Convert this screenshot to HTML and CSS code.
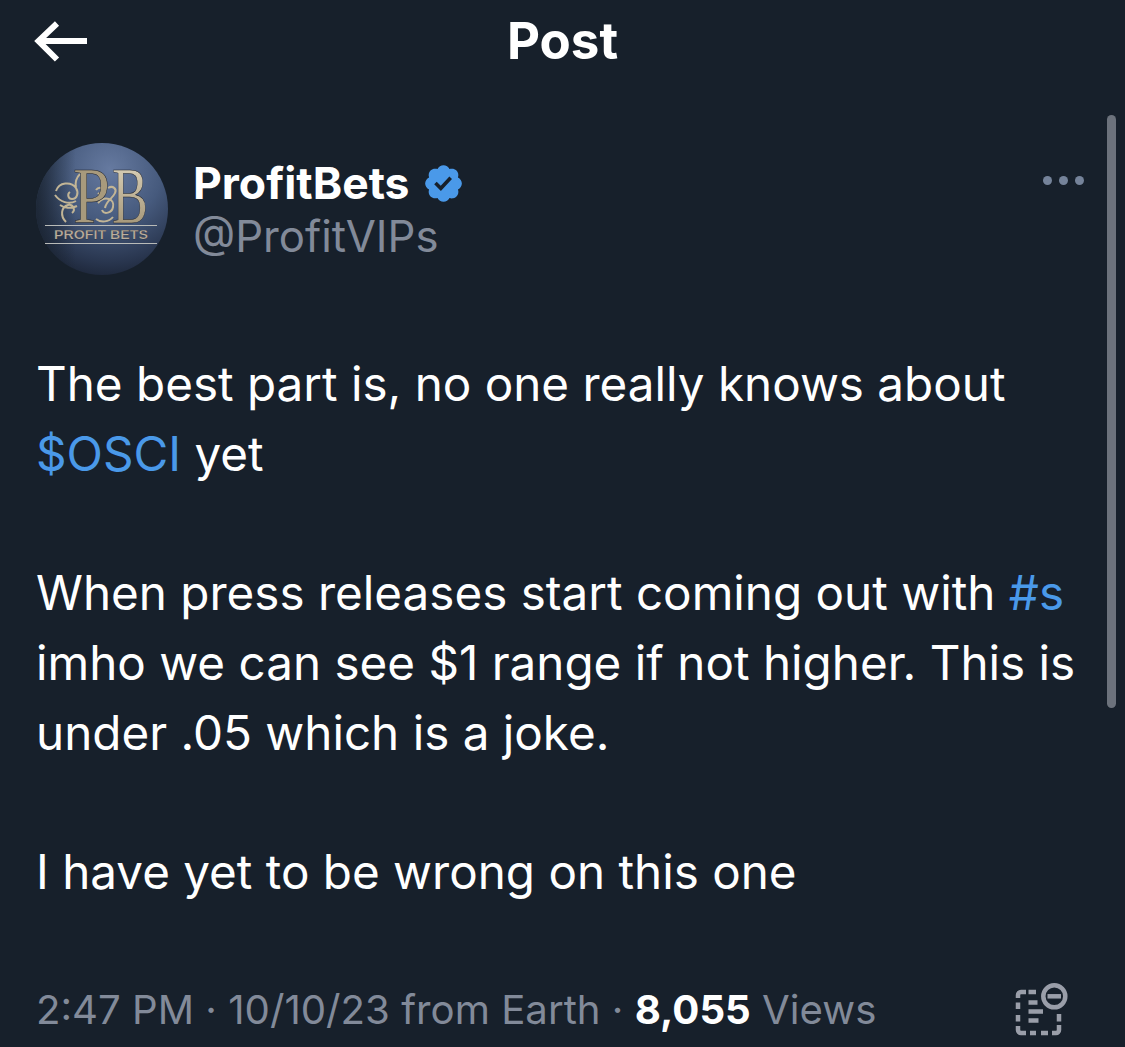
FILE: index.html
```html
<!DOCTYPE html>
<html lang="en">
<head>
<meta charset="utf-8">
<title>Post</title>
<link rel="stylesheet" href="styles.css">
</head>
<body>
<div class="screen">
  <header class="topbar">
    <svg class="back" viewBox="0 0 54 44" width="54" height="44"><path d="M53 20H4M23 2.500 4.500 20 23 38.500" fill="none" stroke="#fff" stroke-width="6"/></svg>
    <h1 class="title">Post</h1>
  </header>
  <section class="author">
    <div class="avatar">
      <svg viewBox="0 0 132 132" width="132" height="132">
        <defs>
          <radialGradient id="av" cx="0.56" cy="0.2" r="0.88"><stop offset="0" stop-color="#667aa0"/><stop offset="0.45" stop-color="#465a7d"/><stop offset="0.8" stop-color="#29364f"/><stop offset="1" stop-color="#182030"/></radialGradient>
          <linearGradient id="gold" x1="0" y1="0" x2="0" y2="1"><stop offset="0" stop-color="#e2dac4"/><stop offset="1" stop-color="#9a8a6a"/></linearGradient>
          <linearGradient id="shade" x1="0" y1="0" x2="1" y2="0"><stop offset="0" stop-color="#17202b" stop-opacity=".75"/><stop offset="0.3" stop-color="#17202b" stop-opacity="0"/></linearGradient>
        </defs>
        <circle cx="66" cy="66" r="66" fill="url(#av)"/>
        <circle cx="66" cy="66" r="66" fill="url(#shade)"/>
        <g fill="none" stroke="#c2b596" stroke-width="2">
          <path d="M20 48c3-9 15-10 20-3 3 5 1 11-4 11-4 0-5-5-2-7M19 52c5 7 14 10 21 6M24 62c4 3 11 4 17 1M44 31c-4 4-5 9-4 14M30 79c-6-6-5-15 2-17 5-1 8 5 4 8"/>
          <path d="M62 60c7-8 17-4 15 4-1 6-9 8-11 3M60 76c5 4 13 3 17-2M72 45c5-3 9 1 7 5-2 5-9 8-10 15M60 47c2-3 6-3 7 0s-3 5-5 3"/>
        </g>
        <text class="mono mono-p" x="37" y="80" textLength="37" lengthAdjust="spacingAndGlyphs">P</text>
        <text class="mono" x="76" y="80" textLength="36" lengthAdjust="spacingAndGlyphs">B</text>
        <rect x="9" y="82" width="112" height="1" fill="#b9bbb8"/>
        <text class="brand" x="18" y="96" textLength="94" lengthAdjust="spacingAndGlyphs">PROFIT BETS</text>
        <rect x="9" y="100" width="112" height="1" fill="#b9bbb8"/>
      </svg>
    </div>
    <div class="names">
      <div class="name-row">
        <span class="name">ProfitBets</span>
        <svg class="badge" viewBox="0 0 22 22" width="43" height="43"><path fill="#4a99e9" d="M20.396 11c-.018-.646-.215-1.275-.57-1.816-.354-.54-.852-.972-1.438-1.246.223-.607.27-1.264.14-1.897-.131-.634-.437-1.218-.882-1.687-.47-.445-1.053-.75-1.687-.882-.633-.13-1.29-.083-1.897.14-.273-.587-.704-1.086-1.245-1.44S11.647 1.620 11 1.604c-.646.017-1.273.213-1.813.568s-.969.854-1.240 1.440c-.608-.223-1.267-.272-1.902-.14-.635.13-1.220.436-1.690.882-.445.47-.749 1.055-.878 1.688-.13.633-.08 1.290.144 1.896-.587.274-1.087.705-1.443 1.245-.356.54-.555 1.170-.574 1.817.02.647.218 1.276.574 1.817.356.54.856.972 1.443 1.245-.224.606-.274 1.263-.144 1.896.13.634.433 1.218.877 1.688.47.443 1.054.747 1.687.878.633.132 1.290.084 1.897-.136.274.586.705 1.084 1.246 1.439.54.354 1.170.551 1.816.569.647-.016 1.276-.213 1.817-.567s.972-.854 1.245-1.440c.604.239 1.266.296 1.903.164.636-.132 1.220-.447 1.680-.907.46-.46.776-1.044.908-1.681s.075-1.299-.165-1.903c.586-.274 1.084-.705 1.439-1.246.354-.54.551-1.170.569-1.816z"/><path fill="#17202b" d="M9.662 14.850l-3.429-3.428 1.293-1.302 2.072 2.072 4.400-4.794 1.347 1.246z"/></svg>
      </div>
      <div class="handle">@ProfitVIPs</div>
    </div>
    <div class="more"><i></i><i></i><i></i></div>
  </section>
  <article class="body">
    <p>The best part is, no one really knows about<br><span class="link">$OSCI</span> yet</p>
    <p>When press releases start coming out with <span class="link">#s</span><br>imho we can see $1 range if not higher. This is<br>under .05 which is a joke.</p>
    <p>I have yet to be wrong on this one</p>
  </article>
  <footer class="meta">
    <div class="stamp">2:47 PM · 10/10/23 from Earth · <b>8,055</b> Views</div>
    <svg class="analytics" viewBox="0 0 56 56" width="56" height="56" fill="none" stroke="#9a9ea9" stroke-width="4.500">
      <path d="M6 16v-3a3 3 0 0 1 3-3h5M16.500 10H24M6 20.500V27M6 33v6.500M6 44v4a3 3 0 0 0 3 3h5M18 51h6M29 51h7M40 51h4a3 3 0 0 0 3-3v-5M47 39.500V32"/>
      <path d="M16.500 20.500h9M16.500 29.500h14.500M16.500 38.500h10"/>
      <circle cx="42.300" cy="14.300" r="11"/>
      <path d="M35.500 14.300h13.500"/>
    </svg>
  </footer>
  <div class="scrollbar"></div>
</div>
</body>
</html>
```
FILE: styles.css
```css
* { box-sizing: border-box; }
html, body { margin: 0; padding: 0; background: #17202b; }
.screen {
  position: relative;
  width: 1125px;
  height: 1047px;
  overflow: hidden;
  background: #17202b;
  color: #fff;
  font-family: Inter, "Liberation Sans", sans-serif;
}
.topbar {
  position: relative;
  display: flex;
  align-items: center;
  justify-content: center;
  height: 82px;
}
.back { position: absolute; left: 34px; top: 21px; }
.title { margin: 0; font-size: 51px; font-weight: 700; line-height: 82px; }
.author {
  display: flex;
  align-items: flex-start;
  margin-top: 61px;
  padding: 0 41px 0 36px;
}
.avatar { width: 132px; height: 132px; flex: none; }
.avatar svg { display: block; }
.mono { font-family: "Liberation Serif", serif; font-size: 80px; fill: url(#gold); stroke: #1a1e28; stroke-width: .5px; }
.mono-p { fill: #a89a7c; }
.brand { font-family: "Liberation Sans", sans-serif; font-size: 13.500px; font-weight: 700; fill: #bcae9e; stroke: #1a1e28; stroke-width: .25px; }
.names { margin-left: 25px; flex: 1; }
.name-row { display: flex; align-items: center; gap: 12px; height: 48px; margin-top: 16px; }
.name { font-size: 44.500px; font-weight: 700; line-height: 48px; }
.handle { font-size: 43.700px; line-height: 60px; color: #828a99; }
.more { display: flex; gap: 7px; margin-top: 33px; }
.more i { width: 9px; height: 9px; border-radius: 50%; background: #75839a; }
.body { margin-top: 74px; padding-left: 36px; font-size: 47.600px; line-height: 69.700px; color: #fff; }
.body p { margin: 0 0 69.700px; white-space: nowrap; }
.body p:last-child { margin-bottom: 0; }
.link { color: #4a99e9; }
.meta {
  display: flex;
  align-items: center;
  justify-content: space-between;
  margin-top: 75px;
  padding: 0 57px 0 36px;
}
.stamp { font-size: 40.200px; line-height: 56px; color: #828a99; white-space: nowrap; }
.stamp b { color: #fff; font-weight: 700; }
.analytics { display: block; }
.scrollbar {
  position: absolute;
  left: 1107px;
  top: 115px;
  width: 9px;
  height: 593px;
  border-radius: 5px;
  background: #6c727c;
}
```
